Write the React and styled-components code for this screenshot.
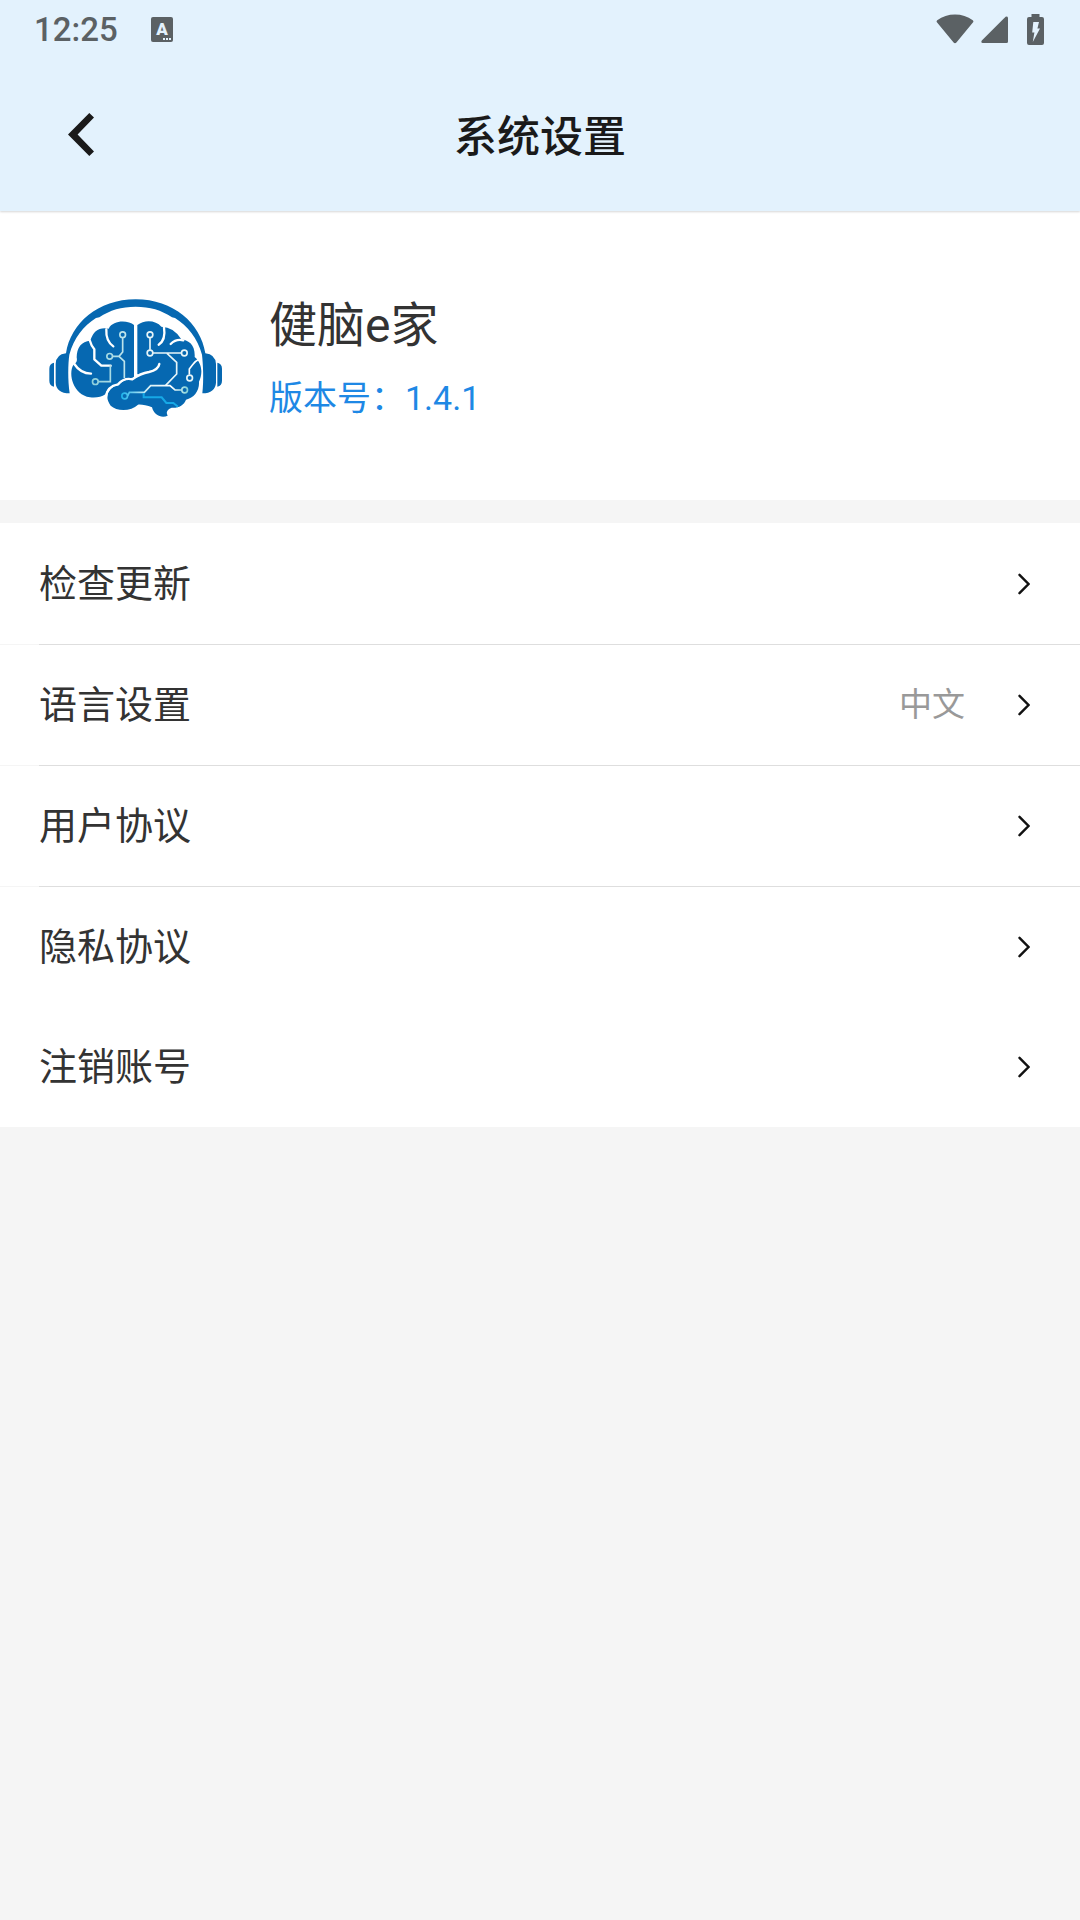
import styled, { createGlobalStyle } from "styled-components";

const colors = {
  header: "#e3f2fd",
  page: "#f5f5f5",
  surface: "#ffffff",
  title: "#1a1a1a",
  text: "#333333",
  grey: "#999999",
  status: "#5b6164",
  link: "#1e88e5",
  brand: "#0668b1",
};

const GlobalStyle = createGlobalStyle`
  * {
    box-sizing: border-box;
  }

  body {
    margin: 0;

    background: ${colors.page};
    color: ${colors.text};
    font-family: Roboto, "Noto Sans CJK SC", sans-serif;
  }

  button {
    border: 0;
    background: none;
    color: inherit;
    font: inherit;
    cursor: pointer;
  }

  svg {
    display: block;
    flex-shrink: 0;
  }
`;

const Header = styled.header`
  position: relative;

  background: ${colors.header};
  box-shadow: 0 1px 2px rgba(0, 0, 0, 0.16);
`;

const StatusBar = styled.div`
  display: flex;
  align-items: center;
  justify-content: space-between;
  height: 58px;
  padding: 0 36px 0 34px;

  color: ${colors.status};
`;

const StatusGroup = styled.div`
  display: flex;
  align-items: center;
  gap: ${({ $gap }) => $gap}px;
`;

const Clock = styled.time`
  padding-top: 2px;

  font-size: 33px;
  font-weight: 500;
  line-height: 40px;
`;

const NavBar = styled.div`
  display: grid;
  grid-template-columns: 160px 1fr 160px;
  align-items: center;
  height: 153px;
`;

const BackButton = styled.button`
  justify-self: start;
  padding: 20px 32px 20px 68px;
`;

const Title = styled.h1`
  margin: 0;
  padding-top: 4px;

  color: ${colors.title};
  font-size: 43px;
  font-weight: 500;
  line-height: 60px;
  text-align: center;
`;

const Profile = styled.section`
  display: flex;
  align-items: center;
  gap: 45px;
  height: 289px;
  padding: 4px 48px 0;

  background: ${colors.surface};
`;

const ProfileText = styled.div`
  padding-top: 8px;
`;

const AppName = styled.h2`
  margin: 0;

  font-size: 48px;
  font-weight: 400;
  line-height: 72px;
`;

const Version = styled.p`
  margin: 0;

  color: ${colors.link};
  font-size: 34px;
  line-height: 72px;
`;

const Menu = styled.ul`
  margin: 23px 0 0;
  padding: 1px 0 0;

  background: ${colors.surface};
  list-style: none;
`;

const MenuItem = styled.li`
  &:not(:first-child)::before {
    content: "";
    display: ${({ $divided }) => ($divided ? "block" : "none")};
    height: 1px;

    background: linear-gradient(to right, #f5f5f5 39px, #dedede 39px);
  }
`;

const MenuButton = styled.button`
  display: flex;
  align-items: center;
  width: 100%;
  height: 120px;
  padding: 0 50px 0 39px;

  line-height: 54px;
  text-align: left;
`;

const Label = styled.span`
  flex: 1;

  font-size: 38px;
`;

const Value = styled.span`
  margin-right: 53px;

  color: ${colors.grey};
  font-size: 33px;
`;

const KeyboardIcon = () => (
  <svg width="22" height="25" viewBox="0 0 22 25" aria-hidden="true">
    <rect width="22" height="25" rx="2" fill="currentColor" />
    <text
      x="11"
      y="18"
      fill={colors.header}
      fontFamily="Roboto, sans-serif"
      fontSize="17"
      fontWeight="900"
      textAnchor="middle"
    >
      A
    </text>
    <path d="M12 21h2v2h-2zM15 21h2v2h-2zM18 21h2v2h-2z" fill={colors.header} />
  </svg>
);

const WifiIcon = () => (
  <svg width="38" height="30" viewBox="0 0 38 30" aria-hidden="true">
    <path
      d="M1.2 6.2Q0 7 .9 8.2L17.6 28.6Q19 30 20.4 28.6L37.1 8.2Q38 7 36.8 6.2Q29 .5 19 .5T1.2 6.2Z"
      fill="currentColor"
    />
  </svg>
);

const SignalIcon = () => (
  <svg width="27" height="27" viewBox="0 0 27 27" aria-hidden="true">
    <path
      d="M24.6 .8 .8 24.6Q-.4 27 1.6 27H25.5Q27 27 27 25.5V1.6Q26.4 0 24.6 .8Z"
      fill="currentColor"
    />
  </svg>
);

const BatteryIcon = () => (
  <svg width="17" height="31" viewBox="0 0 17 31" aria-hidden="true">
    <path
      d="M4.5 0H12.5V3H15Q17 3 17 5V29Q17 31 15 31H2Q0 31 0 29V5Q0 3 2 3H4.5Z"
      fill="currentColor"
    />
    <path d="M6.3 8H12L10.4 14.4H13L5.8 28 7.4 18.4H5.2Z" fill={colors.header} />
  </svg>
);

const BackIcon = () => (
  <svg width="26" height="43" viewBox="0 0 26 43" aria-hidden="true">
    <path d="M21.3 0 26 4.5 9.6 21.5 26 38.5 21.3 43 0 21.5Z" fill={colors.title} />
  </svg>
);

const ChevronIcon = () => (
  <svg width="12" height="22" viewBox="0 0 12 22" aria-hidden="true">
    <path
      d="M1.5 1.8 10.5 11 1.5 20.2"
      fill="none"
      stroke="#111"
      strokeWidth="2.4"
      strokeLinecap="round"
    />
  </svg>
);

const Logo = () => (
  <svg width="176" height="120" viewBox="24 24 528 360" role="img" aria-label="健脑e家">
    <defs>
      <linearGradient id="trace" gradientUnits="userSpaceOnUse" x1="160" y1="0" x2="330" y2="0">
        <stop offset="0" stopColor="#8fd0dc" />
        <stop offset="1" stopColor="#e4f5f8" />
      </linearGradient>
      <linearGradient id="lower" gradientUnits="userSpaceOnUse" x1="244" y1="0" x2="444" y2="0">
        <stop offset="0" stopColor="#1cb2ea" />
        <stop offset=".4" stopColor="#d8f1f5" />
        <stop offset=".75" stopColor="#fff" />
        <stop offset="1" stopColor="#7fd0d6" />
      </linearGradient>
    </defs>

    {/* headphones */}
    <g fill={colors.brand}>
      <path d="M78 190C92 100 174 28 287 28S482 100 496 190Q526 193 528 222V278Q526 309 487 310C492 270 489 222 486 194C473 145 443 108 405 84L396 82C364 60 330 50 287 50S210 60 178 82L168 84C130 108 101 145 88 194C84 222 83 270 89 310Q48 309 47 278V222Q48 193 78 190Z" />
      <path d="M42 218V290Q28 287 28 272V236Q28 221 42 218ZM532 218V290Q546 287 546 272V236Q546 221 532 218Z" />
    </g>

    {/* brain */}
    <g fill={colors.brand}>
      <path d="M282 105C266 91 220 88 206 116Q164 108 151 152Q111 156 110 202C112 212 111 218 100 225C84 252 99 314 150 322Q178 325 196 313C202 290 223 284 236 282Q252 262 282 263Z" />
      <path d="M292 105C313 88 348 90 364 110Q402 111 424 148C447 151 466 165 464 201C488 222 488 252 477 275C479 302 462 325 438 329C432 346 414 355 395 353Q374 362 383 377C366 385 342 377 336 352C320 346 305 343 294 344C274 364 231 365 212 347C191 320 205 290 236 286Q252 264 280 268Q302 255 292 252Z" />
    </g>

    {/* folds */}
    <g fill="none" stroke="#fff" strokeWidth="7" strokeLinecap="round" strokeLinejoin="round">
      <path d="M287 94V258" />
      <path d="M199 118Q197 153 220 169" />
      <path d="M150 153Q154 168 163 178V208L184 227H212" />
      <path d="M103 222Q121 250 153 251" />
      <path d="M372 112Q378 150 356 164" />
      <path d="M392 162Q408 146 430 151" />
      <path d="M198 321Q202 288 234 283Q252 262 277 268Q301 250 327 246Q355 240 358 222" />
      <path d="M478 207Q466 213 459 223L448 237V252" strokeWidth="5" />
    </g>

    {/* circuit traces */}
    <g fill="none" stroke="url(#trace)" strokeWidth="5">
      <path d="M248 144V186L237 199H218M237 199 253 214V264" />
      <path d="M175 275H211V226" />
      <circle cx="248" cy="134" r="8.5" />
      <circle cx="209" cy="199" r="8.5" />
      <circle cx="166" cy="275" r="8.5" />
    </g>
    <g fill="none" stroke="#e7f5f8" strokeWidth="5">
      <path d="M330 144V179M339 189H423M381 190 410 217V252L377 286" />
      <circle cx="330" cy="134" r="8.5" />
      <circle cx="330" cy="189" r="8.5" />
      <circle cx="433" cy="189" r="8.5" />
      <circle cx="449" cy="264" r="8.5" />
    </g>
    <g fill="none" stroke="url(#lower)" strokeWidth="5">
      <path d="M263 318 268 307H313L332 287H390L405 300H425" />
      <circle cx="254" cy="318" r="8.5" />
      <circle cx="434" cy="300" r="8.5" />
    </g>
    <path
      d="M311 309V322H365L379 339H400L414 350"
      fill="none"
      stroke="#16a8e6"
      strokeWidth="6"
    />
  </svg>
);

const menuItems = [
  { label: "检查更新" },
  { label: "语言设置", value: "中文", divided: true },
  { label: "用户协议", divided: true },
  { label: "隐私协议", divided: true },
  { label: "注销账号" },
];

const App = () => {
  return (
    <>
      <GlobalStyle />
      <Header>
        <StatusBar>
          <StatusGroup $gap={33}>
            <Clock>12:25</Clock>
            <KeyboardIcon />
          </StatusGroup>
          <StatusGroup $gap={19}>
            <StatusGroup $gap={7}>
              <WifiIcon />
              <SignalIcon />
            </StatusGroup>
            <BatteryIcon />
          </StatusGroup>
        </StatusBar>
        <NavBar>
          <BackButton type="button" aria-label="返回">
            <BackIcon />
          </BackButton>
          <Title>系统设置</Title>
        </NavBar>
      </Header>
      <main>
        <Profile>
          <Logo />
          <ProfileText>
            <AppName>健脑e家</AppName>
            <Version>版本号：1.4.1</Version>
          </ProfileText>
        </Profile>
        <Menu>
          {menuItems.map(({ label, value, divided }) => (
            <MenuItem key={label} $divided={divided}>
              <MenuButton type="button">
                <Label>{label}</Label>
                {value && <Value>{value}</Value>}
                <ChevronIcon />
              </MenuButton>
            </MenuItem>
          ))}
        </Menu>
      </main>
    </>
  );
};

export default App;
